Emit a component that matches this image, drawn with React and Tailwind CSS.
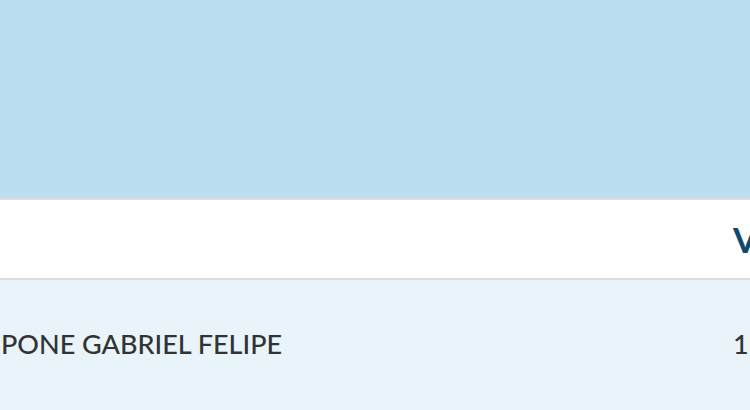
export default function App() {
  return (
    <div className="w-[750px] h-[410px] overflow-hidden bg-white font-['Lato',sans-serif]">
      <div className="h-[198px] bg-[#bcdef1]" />
      <div className="border-t-2 border-[#dddddd]">
        <div className="grid grid-cols-[733px_1fr] h-[80px] items-center bg-white border-b-2 border-[#dddddd]">
          <div />
          <div className="text-[35px] font-bold leading-none text-[#0d4a6e] whitespace-nowrap">
            V
          </div>
        </div>
        <div className="grid grid-cols-[733px_1fr] h-[130px] pb-[4px] items-center bg-[#e8f4fa]">
          <div className="pl-px text-[27px] font-medium leading-none text-[#333333] whitespace-nowrap">
            PONE GABRIEL FELIPE
          </div>
          <div className="text-[27px] font-medium leading-none text-[#333333] whitespace-nowrap">
            1
          </div>
        </div>
      </div>
    </div>
  );
}
